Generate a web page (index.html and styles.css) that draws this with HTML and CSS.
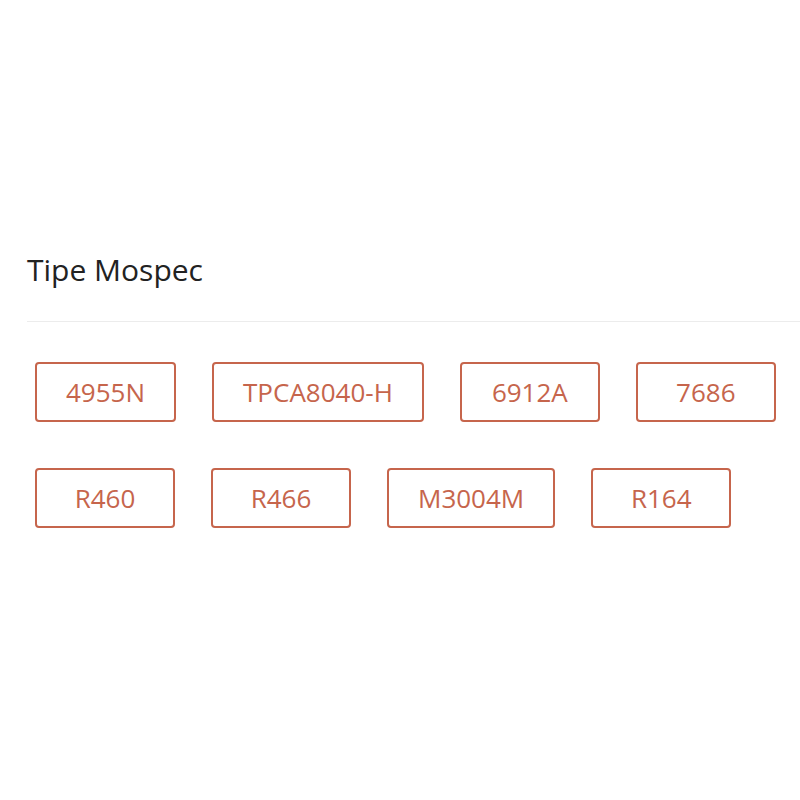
FILE: index.html
```html
<!DOCTYPE html>
<html>
<head>
<meta charset="utf-8">
<link rel="stylesheet" href="styles.css">
</head>
<body>
<section class="panel">
  <h2 class="title">Tipe Mospec</h2>
  <div class="divider"></div>
  <div class="chips">
    <div class="chip">4955N</div>
    <div class="chip">TPCA8040-H</div>
    <div class="chip">6912A</div>
    <div class="chip">7686</div>
    <div class="chip">R460</div>
    <div class="chip">R466</div>
    <div class="chip">M3004M</div>
    <div class="chip">R164</div>
  </div>
</section>
</body>
</html>
```
FILE: styles.css
```css
html, body {
  margin: 0;
  padding: 0;
  background: #fff;
}
.panel {
  padding: 250px 0 0 27px;
  font-family: "Open Sans", "Noto Sans", sans-serif;
}
.title {
  margin: 0;
  font-size: 30px;
  font-weight: 400;
  color: #222;
  line-height: 40px;
}
.divider {
  height: 1px;
  background: #ececec;
  margin-top: 31px;
}
.chips {
  display: flex;
  flex-wrap: wrap;
  column-gap: 36px;
  row-gap: 46px;
  padding: 40px 0 0 8px;
  width: 760px;
}
.chip {
  box-sizing: border-box;
  min-width: 140px;
  height: 60px;
  padding: 0 29px;
  border: 2px solid #c6654c;
  border-radius: 4px;
  color: #c6654c;
  font-size: 26px;
  display: flex;
  align-items: center;
  justify-content: center;
}
```
